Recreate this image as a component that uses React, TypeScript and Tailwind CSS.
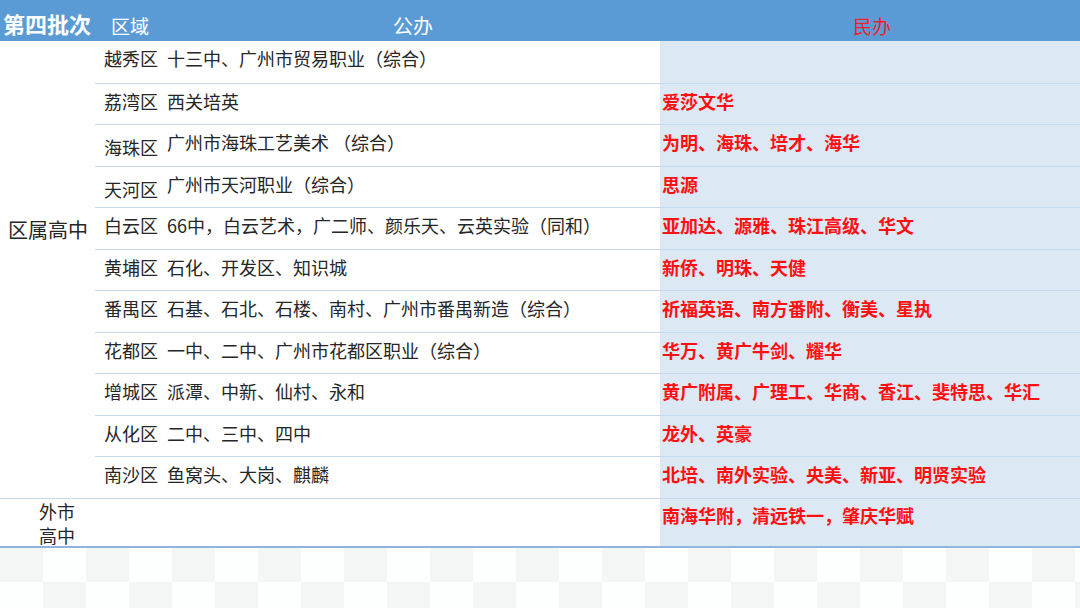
import React from "react";

const rows = [
  { area: "越秀区", pub: "十三中、广州市贸易职业（综合）", pri: "" },
  { area: "荔湾区", pub: "西关培英", pri: "爱莎文华" },
  { area: "海珠区", pub: "广州市海珠工艺美术 （综合）", pri: "为明、海珠、培才、海华", low: true },
  { area: "天河区", pub: "广州市天河职业（综合）", pri: "思源", low: true },
  { area: "白云区", pub: "66中，白云艺术，广二师、颜乐天、云英实验（同和）", pri: "亚加达、源雅、珠江高级、华文" },
  { area: "黄埔区", pub: "石化、开发区、知识城", pri: "新侨、明珠、天健" },
  { area: "番禺区", pub: "石基、石北、石楼、南村、广州市番禺新造（综合）", pri: "祈福英语、南方番附、衡美、星执" },
  { area: "花都区", pub: "一中、二中、广州市花都区职业（综合）", pri: "华万、黄广牛剑、耀华" },
  { area: "增城区", pub: "派潭、中新、仙村、永和", pri: "黄广附属、广理工、华商、香江、斐特思、华汇" },
  { area: "从化区", pub: "二中、三中、四中", pri: "龙外、英豪" },
  { area: "南沙区", pub: "鱼窝头、大岗、麒麟", pri: "北培、南外实验、央美、新亚、明贤实验" },
];

const font = { fontFamily: '"Noto Sans CJK SC", "Noto Sans", sans-serif' };

export default function App() {
  const checks = Array.from({ length: 2 * 26 });
  return (
    <div className="w-[1080px] h-[608px] bg-white overflow-hidden text-[#262626]" style={font}>
      {/* header */}
      <div className="h-[41px] bg-[#5b9bd5] flex items-end pb-[2px] text-white">
        <div className="w-[95px] pl-[3px] text-[22px] font-bold leading-[30px] mb-[1px] whitespace-nowrap">第四批次</div>
        <div className="w-[298px] pl-[16px] text-[19px] leading-[26px]">区域</div>
        <div className="w-[267px] text-[20px] leading-[26px]">公办</div>
        <div className="flex-1 pl-[193px] text-[19px] leading-[26px] text-[#e8242c]">民办</div>
      </div>

      <div className="flex">
        <div className="w-[95px] pt-[176px] pl-[8px] text-[20px] leading-[26px] whitespace-nowrap">区属高中</div>
        <div className="flex-1 flex flex-col">
          {rows.map((r, i) => (
            <div
              key={r.area}
              className={`flex h-[41.5px] ${i > 0 ? "border-t border-[#c6d9ee]" : ""}`}
            >
              <div className="w-[565px] flex items-start text-[18px] leading-[22px]">
                <span className={`pl-[9px] w-[72px] shrink-0 whitespace-nowrap ${r.low ? "pt-[11px]" : "pt-[6px]"}`}>{r.area}</span>
                <span className="pt-[6px] whitespace-nowrap">{r.pub}</span>
              </div>
              <div className="flex-1 bg-[#dde8f5] pl-[2px] pt-[6px] text-[18px] leading-[22px] font-bold text-[#ff1010] whitespace-nowrap">
                {r.pri}
              </div>
            </div>
          ))}
        </div>
      </div>

      <div className="flex h-[50px] border-t border-[#c6d9ee] border-b-2 border-b-[#8fb4dd]">
        <div className="w-[660px] pl-[39px] text-[18px] leading-[24px]">
          <div>外市</div>
          <div>高中</div>
        </div>
        <div className="flex-1 bg-[#dde8f5] pl-[2px] pt-[5px] text-[18px] leading-[22px] font-bold text-[#ff1010] whitespace-nowrap">
          南海华附，清远铁一，肇庆华赋
        </div>
      </div>

      <div className="grid grid-cols-[repeat(26,43px)] grid-rows-[repeat(2,34px)]">
        {checks.map((_, i) => {
          const r = Math.floor(i / 26);
          const c = i % 26;
          const dark = (r + c) % 2 === 0;
          return <div key={i} className={dark ? "bg-[#f4f6f6]" : "bg-[#fdfefe]"} />;
        })}
      </div>
    </div>
  );
}
